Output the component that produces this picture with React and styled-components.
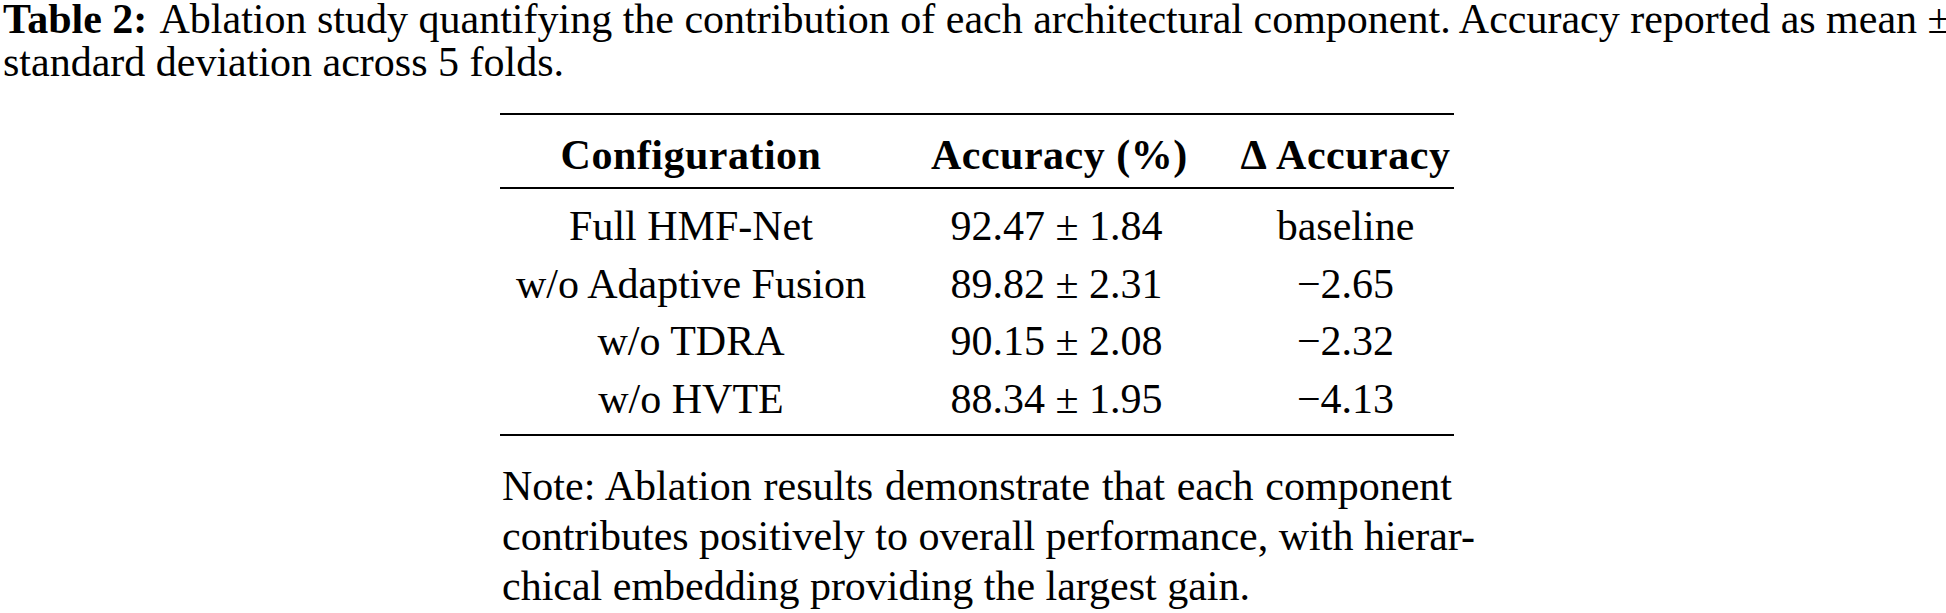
import React from "react";
import styled, { createGlobalStyle } from "styled-components";

const GlobalStyle = createGlobalStyle`
  html, body {
    margin: 0;
    padding: 0;
    background: #ffffff;
    overflow: hidden;
  }
  body {
    font-family: "Liberation Serif", "Times New Roman", serif;
    color: #000000;
  }
`;

const Page = styled.div`
  width: 1954px;
  display: flex;
  flex-direction: column;
`;

const Caption = styled.p`
  margin: -2px 0 0 0;
  padding-left: 3px;
  font-size: 42px;
  line-height: 43px;
  white-space: nowrap;
`;

const CaptionLabel = styled.strong`
  font-weight: 700;
  margin-right: 4px;
`;

const Figure = styled.div`
  align-self: center;
  width: 954px;
  margin-top: 29px;
  display: flex;
  flex-direction: column;
`;

const Table = styled.table`
  width: 954px;
  table-layout: fixed;
  border-collapse: collapse;
  font-size: 42px;
`;

const HeadRow = styled.tr`
  border-top: 2px solid #000;
  border-bottom: 2px solid #000;
`;

const BodyRow = styled.tr`
  &:last-child {
    border-bottom: 2px solid #000;
  }
`;

const cellPadding = `
  &:nth-child(1) { padding-left: 3px; padding-right: 26px; }
  &:nth-child(2) { padding-left: 26px; padding-right: 26px; }
  &:nth-child(3) { padding-left: 30px; padding-right: 1px; }
`;

const HeadCell = styled.th`
  font-weight: 700;
  text-align: center;
  white-space: nowrap;
  line-height: 48px;
  padding-top: 16px;
  padding-bottom: 8px;
  letter-spacing: 0.5px;
  ${cellPadding}
`;

const Cell = styled.td`
  font-weight: 400;
  text-align: center;
  white-space: nowrap;
  line-height: 57.5px;
  padding-top: 0;
  padding-bottom: 0;
  ${cellPadding}
  tr:first-child > & {
    padding-top: 9px;
  }
  tr:last-child > & {
    padding-bottom: 6px;
  }
`;

const Note = styled.div`
  margin-top: 25px;
  padding: 0 2px;
  font-size: 42px;
  line-height: 50px;
`;

const NoteLine = styled.span`
  display: block;
  white-space: nowrap;
  text-align: justify;
  text-align-last: ${(p) => (p.$last ? "left" : "justify")};
`;

const rows = [
  ["Full HMF-Net", "92.47 ± 1.84", "baseline"],
  ["w/o Adaptive Fusion", "89.82 ± 2.31", "−2.65"],
  ["w/o TDRA", "90.15 ± 2.08", "−2.32"],
  ["w/o HVTE", "88.34 ± 1.95", "−4.13"],
];

export default function App() {
  return (
    <>
      <GlobalStyle />
      <Page>
        <Caption>
          <CaptionLabel>Table 2:</CaptionLabel> Ablation study quantifying the
          contribution of each architectural component. Accuracy reported as
          mean ±
          <br />
          standard deviation across 5 folds.
        </Caption>
        <Figure>
          <Table>
            <colgroup>
              <col style={{ width: "405px" }} />
              <col style={{ width: "303px" }} />
              <col style={{ width: "246px" }} />
            </colgroup>
            <thead>
              <HeadRow>
                <HeadCell>Configuration</HeadCell>
                <HeadCell>Accuracy (%)</HeadCell>
                <HeadCell>Δ Accuracy</HeadCell>
              </HeadRow>
            </thead>
            <tbody>
              {rows.map((r) => (
                <BodyRow key={r[0]}>
                  <Cell>{r[0]}</Cell>
                  <Cell>{r[1]}</Cell>
                  <Cell>{r[2]}</Cell>
                </BodyRow>
              ))}
            </tbody>
          </Table>
          <Note>
            <NoteLine>
              Note: Ablation results demonstrate that each component
            </NoteLine>
            <NoteLine>
              contributes positively to overall performance, with hierar-
            </NoteLine>
            <NoteLine $last>chical embedding providing the largest gain.</NoteLine>
          </Note>
        </Figure>
      </Page>
    </>
  );
}
